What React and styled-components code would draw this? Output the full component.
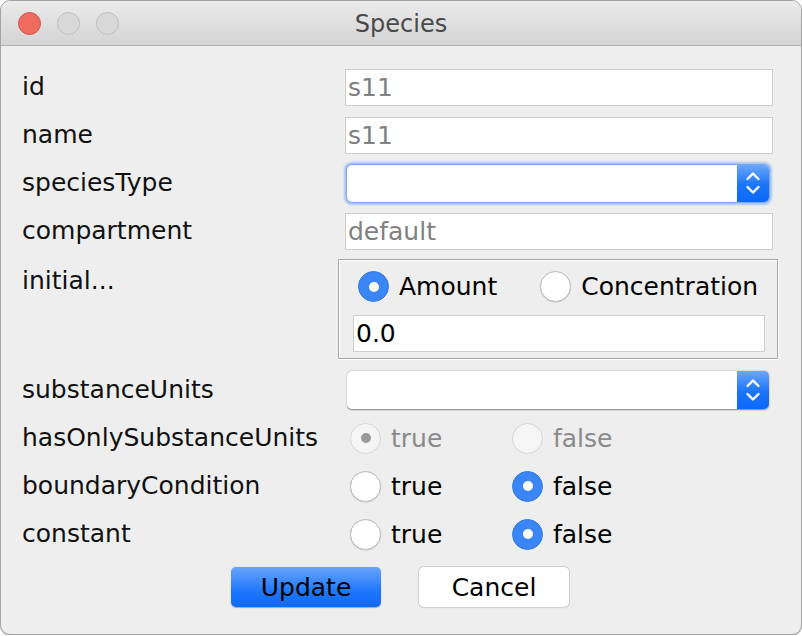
import React from "react";
import styled, { createGlobalStyle, css } from "styled-components";

const GlobalStyle = createGlobalStyle`
  html, body {
    margin: 0;
    padding: 0;
    background: #ffffff;
  }
  body {
    font-family: "DejaVu Sans", "Liberation Sans", sans-serif;
  }
`;

const Window = styled.div`
  width: 800px;
  height: 633px;
  border: 1px solid #a3a3a3;
  border-radius: 10px;
  background: #eeeeee;
  overflow: hidden;
  display: flex;
  flex-direction: column;
  box-shadow: 0 1px 1px rgba(0, 0, 0, 0.25);
`;

const TitleBar = styled.div`
  height: 44px;
  flex: none;
  display: grid;
  grid-template-columns: 1fr auto 1fr;
  align-items: center;
  background: linear-gradient(#ebebeb, #d4d4d4);
  border-bottom: 1px solid #b3b3b3;
`;

const Lights = styled.div`
  display: flex;
  gap: 16px;
  padding-left: 17px;
`;

const Light = styled.span`
  width: 23px;
  height: 23px;
  border-radius: 50%;
  box-sizing: border-box;
  background: ${(p) => (p.$red ? "#ef6b5f" : "#d9d9d9")};
  border: 1px solid ${(p) => (p.$red ? "#d4544a" : "#bdbdbd")};
`;

const Title = styled.div`
  font-size: 24px;
  color: #4a4a4a;
  padding-top: 1px;
`;

const Body = styled.div`
  padding: 17px 0 0 23px;
  display: flex;
  flex-direction: column;
`;

const Row = styled.div`
  display: grid;
  grid-template-columns: 314px 440px;
  height: ${(p) => p.$h || 48}px;
  align-items: ${(p) => (p.$top ? "start" : "center")};
`;

const Label = styled.div`
  font-size: 25px;
  color: #111;
  line-height: 28px;
  margin-left: -2px;
  padding-top: ${(p) => (p.$top ? 12 : 0)}px;
`;

const TextField = styled.div`
  box-sizing: border-box;
  height: 37px;
  width: ${(p) => p.$w || 428}px;
  margin-left: ${(p) => (p.$ml === undefined ? 7 : p.$ml)}px;
  background: #fff;
  border: 1px solid #cdcdcd;
  font-size: 25px;
  line-height: 35px;
  padding-left: 2px;
  color: ${(p) => (p.$dim ? "#808080" : "#000")};
`;

const Combo = styled.div`
  box-sizing: border-box;
  width: 422px;
  height: 38px;
  margin-left: 9px;
  display: flex;
  background: #fff;
  border-radius: 5px;
  box-shadow: 0 0.5px 1.5px rgba(0, 0, 0, 0.45);
  ${(p) =>
    p.$focus &&
    css`
      height: 37px;
      box-shadow: 0 0 0 1px #7aa9ea, 0 0 2px 3px rgba(120, 170, 240, 0.6);
    `}
`;

const ComboField = styled.div`
  flex: 1;
`;

const ComboButton = styled.div`
  width: 32px;
  border-radius: 0 5px 5px 0;
  background: linear-gradient(#6ba6fc, #1a74fc 55%, #0c68fb);
  display: flex;
  align-items: center;
  justify-content: center;
`;

const Chevrons = () => (
  <svg width="16" height="26" viewBox="0 0 16 26" fill="none">
    <path d="M2.5 9 L8 3.5 L13.5 9" stroke="#fff" strokeWidth="2.4" strokeLinecap="round" strokeLinejoin="round" />
    <path d="M2.5 17 L8 22.5 L13.5 17" stroke="#fff" strokeWidth="2.4" strokeLinecap="round" strokeLinejoin="round" />
  </svg>
);

const Panel = styled.div`
  box-sizing: border-box;
  margin-top: 4px;
  width: 440px;
  height: 100px;
  border: 1px solid #a6a6a6;
  box-shadow: inset 1px 1px 0 #fff, 1px 1px 0 #fff;
  padding: 11px 12px 0 14px;
  display: flex;
  flex-direction: column;
  gap: 13px;
`;

const PanelRadios = styled.div`
  display: flex;
  align-items: center;
  padding-left: 5px;
  gap: 43px;
`;

const RadioGroup = styled.div`
  display: grid;
  grid-template-columns: 162px 162px;
  margin-left: 12px;
`;

const RadioItem = styled.div`
  display: flex;
  align-items: center;
  gap: 10px;
  font-size: 25px;
  color: ${(p) => (p.$disabled ? "#8a8a8a" : "#000")};
`;

const Circle = styled.span`
  box-sizing: border-box;
  flex: none;
  width: 31px;
  height: 31px;
  border-radius: 50%;
  display: flex;
  align-items: center;
  justify-content: center;
  ${(p) =>
    p.$on && !p.$disabled
      ? css`
          background: #3b86f7;
          border: 1px solid #3478e6;
        `
      : p.$disabled
      ? css`
          background: #f5f5f5;
          border: 1px solid #d6d6d6;
        `
      : css`
          background: #fff;
          border: 1px solid #b9b9b9;
          box-shadow: 0 0.5px 1px rgba(0, 0, 0, 0.15);
        `}

  &::after {
    content: "";
    display: ${(p) => (p.$on ? "block" : "none")};
    width: 10px;
    height: 10px;
    border-radius: 50%;
    background: ${(p) => (p.$disabled ? "#9a9a9a" : "#fff")};
  }
`;

const Radio = ({ on, disabled, children }) => (
  <RadioItem $disabled={disabled}>
    <Circle $on={on} $disabled={disabled} />
    {children}
  </RadioItem>
);

const Buttons = styled.div`
  display: flex;
  justify-content: center;
  gap: 38px;
  padding: 9px 0 0 0;
  margin-left: -23px;
  margin-right: 2px;
`;

const Button = styled.div`
  box-sizing: border-box;
  width: 150px;
  height: 40px;
  border-radius: 5px;
  font-size: 25px;
  display: flex;
  align-items: center;
  justify-content: center;
  color: #000;
  ${(p) =>
    p.$primary
      ? css`
          background: linear-gradient(#6aa5fc, #1f77fc 60%, #0d69fb);
          box-shadow: 0 0.5px 1px rgba(0, 0, 0, 0.3);
        `
      : css`
          background: #fff;
          box-shadow: 0 0 0 1px #cfcfcf, 0 1px 1px rgba(0, 0, 0, 0.2);
        `}
`;

const BoolRow = ({ label, value, disabled }) => (
  <Row>
    <Label>{label}</Label>
    <RadioGroup>
      <Radio on={value === true} disabled={disabled}>true</Radio>
      <Radio on={value === false} disabled={disabled}>false</Radio>
    </RadioGroup>
  </Row>
);

export default function App() {
  return (
    <>
      <GlobalStyle />
      <Window>
        <TitleBar>
          <Lights>
            <Light $red />
            <Light />
            <Light />
          </Lights>
          <Title>Species</Title>
          <div />
        </TitleBar>
        <Body>
          <Row>
            <Label>id</Label>
            <TextField $dim>s11</TextField>
          </Row>
          <Row>
            <Label>name</Label>
            <TextField $dim>s11</TextField>
          </Row>
          <Row>
            <Label>speciesType</Label>
            <Combo $focus>
              <ComboField />
              <ComboButton>
                <Chevrons />
              </ComboButton>
            </Combo>
          </Row>
          <Row>
            <Label>compartment</Label>
            <TextField $dim>default</TextField>
          </Row>
          <Row $h={111} $top>
            <Label $top>initial...</Label>
            <Panel>
              <PanelRadios>
                <Radio on>Amount</Radio>
                <Radio>Concentration</Radio>
              </PanelRadios>
              <TextField $w={412} $ml={0}>0.0</TextField>
            </Panel>
          </Row>
          <Row>
            <Label>substanceUnits</Label>
            <Combo>
              <ComboField />
              <ComboButton>
                <Chevrons />
              </ComboButton>
            </Combo>
          </Row>
          <BoolRow label="hasOnlySubstanceUnits" value={true} disabled />
          <BoolRow label="boundaryCondition" value={false} />
          <BoolRow label="constant" value={false} />
          <Buttons>
            <Button $primary>Update</Button>
            <Button>Cancel</Button>
          </Buttons>
        </Body>
      </Window>
    </>
  );
}
